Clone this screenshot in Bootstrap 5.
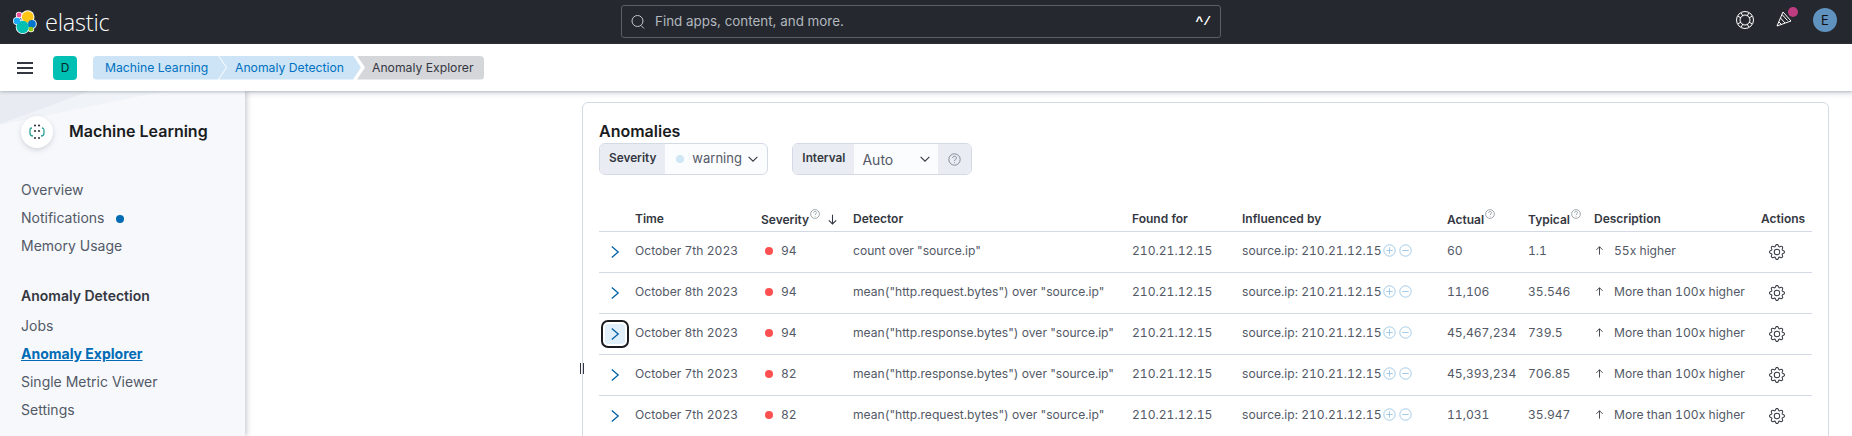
<!DOCTYPE html>
<html lang="en">
<head>
<meta charset="utf-8">
<title>Anomaly Explorer</title>
<link href="https://cdn.jsdelivr.net/npm/bootstrap@5.3.0/dist/css/bootstrap.min.css" rel="stylesheet">
<style>
html,body{height:436px;overflow:hidden;margin:0}
body{font-family:Inter,"Liberation Sans",sans-serif;color:#343741;background:#fff;font-size:14px}
.topbar{height:44px;background:#25282f;padding:0 15px 0 13px}
.brand-word{font-family:"Open Sans",sans-serif;font-weight:300;font-size:23.5px;line-height:44px;color:#fff;margin-left:8px;letter-spacing:-.2px}
.search-box{position:relative;width:600px;height:33px;margin-top:-1px;border:1px solid #5a5e65;border-radius:3px;color:#b3b8bf;padding:0 9px 0 8px}
.search-text{margin-left:9px;font-size:13.4px;flex-grow:1}
.shortcut{color:#fff;font-weight:700;font-size:13px;font-family:"Liberation Mono",monospace}
.top-slot{position:absolute;top:0}
.top-right{position:relative;width:110px;height:44px}
.ring-ic{left:6px;top:10px}
.party-ic{left:46px;top:9px}
.party-dot{position:absolute;left:59px;top:7px;width:10px;height:10px;border-radius:50%;background:#bd3d80}
.user-ava{position:absolute;left:84px;top:8px;width:24px;height:24px;border-radius:50%;background:#6092c0;color:#111;font-size:13px;text-align:center;line-height:24px}
.subbar{height:47px;background:#fff;padding-left:17px;box-shadow:0 1px 3px rgba(105,112,125,.45);position:relative;z-index:3}
.burger{width:16px;height:12px;border-top:2px solid #343741;border-bottom:2px solid #343741;position:relative;margin-right:20px}
.burger::after{content:"";position:absolute;left:0;right:0;top:3px;height:2px;background:#343741}
.space-tile{width:24px;height:24px;border-radius:4px;background:#00bfb3;color:#06282a;font-size:12px;text-align:center;line-height:24px;margin-right:16px}
.crumb{height:24px;line-height:24px;font-size:12.2px;white-space:nowrap}
.crumb-a{width:133px;padding-left:12px;background:#cce4f5;color:#0071c2;border-radius:4px 0 0 4px;clip-path:polygon(0 0,calc(100% - 8px) 0,100% 50%,calc(100% - 8px) 100%,0 100%)}
.crumb-b{width:142px;margin-left:-7px;padding-left:16px;background:#cce4f5;color:#0071c2;clip-path:polygon(0 0,calc(100% - 8px) 0,100% 50%,calc(100% - 8px) 100%,0 100%,8px 50%)}
.crumb-c{width:127px;margin-left:-4px;padding-left:15px;background:#d4d6da;color:#343741;border-radius:0 4px 4px 0;clip-path:polygon(0 0,100% 0,100% 100%,0 100%,8px 50%)}
.page-body{height:345px;position:relative}
.side{position:relative;width:245px;flex:none;height:345px;background:#f6f8fc;box-shadow:2px 0 5px rgba(105,112,125,.35);padding:25px 21px 0;overflow:hidden;z-index:2}
.side::before{content:"";position:absolute;left:0;top:0;width:165px;height:34px;background:#f0f3f8;clip-path:polygon(0 0,100% 0,0 100%)}
.side::after{content:"";position:absolute;left:0;top:0;width:90px;height:33px;background:#e8ebf1;clip-path:polygon(0 0,100% 0,0 100%)}
.side>*{position:relative;z-index:1}
.ml-disc{width:32px;height:32px;border-radius:50%;background:#fff;box-shadow:0 2px 5px rgba(105,112,125,.25);margin-right:16px}
.side-title{font-size:16px;font-weight:600;color:#1a1c21;padding-bottom:3px}
.side-nav{margin-top:28px}
.side-nav .nav-link{padding:0;height:28px;line-height:28px;color:#535966;font-size:14px}
.side-nav .side-head{margin-top:22px;margin-bottom:2px;font-weight:600;color:#343741;line-height:28px;height:28px}
.side-nav .nav-link.current{color:#006bb4;font-weight:700;text-decoration:underline}
.note-dot{display:inline-block;width:8px;height:8px;border-radius:50%;background:#006bb4;margin-left:11px}
.main-area{flex-grow:1;padding:11px 24px 0 337px;position:relative;background:linear-gradient(#eceef2,#fff 8px)}
.panel-box{height:400px;border:1px solid #d3dae6;border-radius:6px;padding:0 16px;background:#fff}
.panel-title{font-size:16px;font-weight:600;color:#1a1c21;margin:0;line-height:20px;padding-top:18px}
.ctrl-row{margin-top:2px;gap:24px;height:32px}
.ctrl-group{height:32px;border:1px solid #d3dae6;border-radius:6px;overflow:hidden;background:#fbfcfd;width:auto;flex-wrap:nowrap}
.ctrl-label{background:#e9edf3;border:0;border-radius:0;padding:0 9px;font-size:11.8px;font-weight:600;color:#343741;height:30px}
.ctrl-select{height:30px;color:#535966;font-size:13px;padding:0 7px 0 9px}
.sev-select{width:103px;padding-left:12px}
.int-select{width:86px;font-size:14px}
.warn-dot{width:8px;height:8px;border-radius:50%;background:#cfe6f5;margin-right:8px;flex:none}
.caret-ic{margin-left:auto}
.help-tile{width:33px;height:30px;background:#e9edf3}
.anom-table{table-layout:fixed;width:1213px;margin:31px 0 0;border-collapse:collapse;--bs-table-bg:transparent;--bs-table-color:#535966;font-variant-numeric:tabular-nums}
.anom-table th,.anom-table td{border-bottom:1px solid #d3dae6;padding:0 4px;vertical-align:middle;white-space:nowrap;overflow:visible;box-shadow:none}
.anom-table th{height:25px;font-size:12px;font-weight:600;color:#343741;padding-top:1px}
.anom-table td{height:41px;font-size:12.1px;color:#535966}
.sev-cell{padding-left:8px!important}
.sev-dot{display:inline-block;width:8px;height:8px;border-radius:50%;background:#fe5050;margin-right:8px}
.exp-btn{width:20px;height:20px;padding:0;border:0;background:transparent;margin-left:2px;border-radius:2px;display:block;position:relative}
.exp-btn.active-focus{background:#e1effa;outline:2px solid #1a1c21;outline-offset:2px;border-radius:3px}
.sup-ic{vertical-align:5px;margin-left:1px}
.sort-ic{margin-left:6px;vertical-align:-2px}
.act-icons{vertical-align:-2px;margin-left:1px}
.act-icons+.act-icons{margin-left:0}
.up-ic{margin-right:9px;vertical-align:-1px}
.gear-ic{display:block;margin-left:8px}
.grip{position:absolute;left:580px;top:272px;width:4px;height:11px;border-left:1px solid #343741;border-right:1px solid #343741;z-index:4}
</style>
</head>
<body>
<svg width="0" height="0" class="position-absolute">
  <symbol id="s-chev" viewBox="0 0 16 16"><path d="M4.800 2.500 11.200 8l-6.400 5.500" fill="none" stroke="#0061a6" stroke-width="1.300"/></symbol>
  <symbol id="s-q" viewBox="0 0 16 16"><circle cx="8" cy="8" r="7" fill="none" stroke="currentColor"/><path d="M5.800 6.200c0-3 4.600-3 4.600-.2 0 1.800-2.300 1.800-2.300 3.800M8.100 11.300v1" fill="none" stroke="currentColor"/></symbol>
  <symbol id="s-plus" viewBox="0 0 16 16"><circle cx="8" cy="8" r="7" fill="none" stroke="#8fbfe3"/><path d="M8 4v8M4 8h8" stroke="#8fbfe3"/></symbol>
  <symbol id="s-minus" viewBox="0 0 16 16"><circle cx="8" cy="8" r="7" fill="none" stroke="#8fbfe3"/><path d="M4 8h8" stroke="#8fbfe3"/></symbol>
  <symbol id="s-up" viewBox="0 0 16 16"><path d="M8 14V2.500M3.500 7 8 2.500 12.500 7" fill="none" stroke="#343741" stroke-width="1.300"/></symbol>
  <symbol id="s-down" viewBox="0 0 16 16"><path d="M8 2v11.500M3.500 9 8 13.500 12.500 9" fill="none" stroke="#343741" stroke-width="1.300"/></symbol>
  <symbol id="s-caret" viewBox="0 0 16 16"><path d="M3 5.500 8 10.500l5-5" fill="none" stroke="#343741" stroke-width="1.200"/></symbol>
  <symbol id="s-gear" viewBox="0 0 16 16"><path fill="#343741" d="M8 4.754a3.246 3.246 0 1 0 0 6.492 3.246 3.246 0 0 0 0-6.492zM5.754 8a2.246 2.246 0 1 1 4.492 0 2.246 2.246 0 0 1-4.492 0z"/><path fill="#343741" d="M9.796 1.343c-.527-1.790-3.065-1.790-3.592 0l-.094.319a.873.873 0 0 1-1.255.52l-.292-.16c-1.640-.892-3.433.902-2.540 2.541l.159.292a.873.873 0 0 1-.52 1.255l-.319.094c-1.790.527-1.790 3.065 0 3.592l.319.094a.873.873 0 0 1 .52 1.255l-.16.292c-.892 1.640.901 3.434 2.541 2.540l.292-.159a.873.873 0 0 1 1.255.52l.094.319c.527 1.790 3.065 1.790 3.592 0l.094-.319a.873.873 0 0 1 1.255-.52l.292.16c1.640.893 3.434-.902 2.540-2.541l-.159-.292a.873.873 0 0 1 .52-1.255l.319-.094c1.790-.527 1.790-3.065 0-3.592l-.319-.094a.873.873 0 0 1-.52-1.255l.16-.292c.893-1.640-.902-3.433-2.541-2.540l-.292.159a.873.873 0 0 1-1.255-.52l-.094-.319zm-2.633.283c.246-.835 1.428-.835 1.674 0l.094.319a1.873 1.873 0 0 0 2.693 1.115l.291-.16c.764-.415 1.600.42 1.184 1.185l-.159.292a1.873 1.873 0 0 0 1.116 2.692l.318.094c.835.246.835 1.428 0 1.674l-.319.094a1.873 1.873 0 0 0-1.115 2.693l.16.291c.415.764-.42 1.600-1.185 1.184l-.291-.159a1.873 1.873 0 0 0-2.693 1.116l-.094.318c-.246.835-1.428.835-1.674 0l-.094-.319a1.873 1.873 0 0 0-2.692-1.115l-.292.16c-.764.415-1.600-.42-1.184-1.185l.159-.291A1.873 1.873 0 0 0 1.945 8.930l-.319-.094c-.835-.246-.835-1.428 0-1.674l.319-.094A1.873 1.873 0 0 0 3.060 4.377l-.16-.292c-.415-.764.42-1.600 1.185-1.184l.292.159a1.873 1.873 0 0 0 2.692-1.115l.094-.319z"/></symbol>
</svg>

<header class="topbar d-flex align-items-center justify-content-between">
  <div class="d-flex align-items-center" style="width:608px">
    <svg width="24" height="24" viewBox="0 0 24 24">
      <circle cx="14.700" cy="7" r="6.800" fill="#fff"/><circle cx="9.700" cy="17" r="7" fill="#fff"/><circle cx="6" cy="5" r="3.200" fill="#fff"/><circle cx="4" cy="11" r="4" fill="#fff"/><circle cx="19" cy="14" r="4.800" fill="#fff"/><circle cx="18" cy="19" r="3.200" fill="#fff"/>
      <circle cx="14.700" cy="7" r="5.800" fill="#fec514"/><circle cx="9.700" cy="17" r="6.200" fill="#00bfb3"/><circle cx="6" cy="5" r="2.400" fill="#f04e98"/><circle cx="4" cy="11" r="3.300" fill="#1ba9f5"/><circle cx="19" cy="14" r="3.900" fill="#0077cc"/><circle cx="18" cy="19.200" r="2.400" fill="#93c90e"/>
    </svg>
    <span class="brand-word">elastic</span>
  </div>
  <div class="search-box d-flex align-items-center">
    <svg width="16" height="16" viewBox="0 0 16 16"><circle cx="7.500" cy="7" r="5.500" fill="none" stroke="#c6cad0"/><path d="m11 11.500 3 3" stroke="#c6cad0"/></svg>
    <span class="search-text">Find apps, content, and more.</span>
    <span class="shortcut">^/</span>
  </div>
  <div class="top-right flex-none ms-auto" style="margin-right:-2px">
    <svg class="top-slot ring-ic" width="20" height="20" viewBox="0 0 20 20" fill="none" stroke="#fff"><circle cx="10" cy="10" r="8.500"/><circle cx="10" cy="10" r="5"/><path d="M2.800 6.200l3.400 1.700M6.200 2.800l1.700 3.400M17.200 6.200l-3.400 1.700M13.800 2.800l-1.700 3.400M2.800 13.800l3.400-1.700M6.200 17.200l1.700-3.400M17.200 13.800l-3.400-1.700M13.800 17.200l-1.700-3.400"/></svg>
    <svg class="top-slot party-ic" width="20" height="20" viewBox="0 0 20 20" fill="none" stroke="#fff"><path d="M8 3 2 17l14-5z"/><path d="M5.500 9 10 14M4 13l2.500 2.500M7 5.500l5.500 6"/></svg>
    <span class="party-dot"></span>
    <span class="user-ava">E</span>
  </div>
</header>

<div class="subbar d-flex align-items-center">
  <span class="burger"></span>
  <span class="space-tile">D</span>
  <nav class="d-flex" aria-label="breadcrumb">
    <span class="crumb crumb-a">Machine Learning</span>
    <span class="crumb crumb-b">Anomaly Detection</span>
    <span class="crumb crumb-c">Anomaly Explorer</span>
  </nav>
</div>

<div class="page-body d-flex">
  <aside class="side">
    <div class="d-flex align-items-center">
      <span class="ml-disc d-flex align-items-center justify-content-center">
        <svg width="18" height="18" viewBox="0 0 18 18"><g fill="#343741"><circle cx="7" cy="2.500" r="1.100"/><circle cx="11" cy="2.500" r="1.100"/><circle cx="7" cy="8" r="1.100"/><circle cx="11" cy="8" r="1.100"/><circle cx="7" cy="15" r="1.100"/><circle cx="11" cy="15" r="1.100"/></g><path d="M4 5C2 5 2 6 2 8v2c0 2 1 3 3 3M14 5c2 0 2 1 2 3v2c0 2-1 3-3 3" fill="none" stroke="#2aa198" stroke-width="1.300"/></svg>
      </span>
      <span class="side-title">Machine Learning</span>
    </div>
    <nav class="nav flex-column side-nav">
      <a class="nav-link" href="#">Overview</a>
      <a class="nav-link" href="#">Notifications<span class="note-dot"></span></a>
      <a class="nav-link" href="#">Memory Usage</a>
      <div class="side-head">Anomaly Detection</div>
      <a class="nav-link" href="#">Jobs</a>
      <a class="nav-link current" href="#">Anomaly Explorer</a>
      <a class="nav-link" href="#">Single Metric Viewer</a>
      <a class="nav-link" href="#">Settings</a>
    </nav>
  </aside>
  <span class="grip"></span>
  <main class="main-area">
    <section class="panel-box">
      <h2 class="panel-title">Anomalies</h2>
      <div class="d-flex ctrl-row">
        <div class="input-group ctrl-group">
          <span class="input-group-text ctrl-label">Severity</span>
          <span class="ctrl-select sev-select d-flex align-items-center"><span class="warn-dot"></span>warning<svg class="caret-ic" width="14" height="14"><use href="#s-caret"/></svg></span>
        </div>
        <div class="input-group ctrl-group">
          <span class="input-group-text ctrl-label">Interval</span>
          <span class="ctrl-select int-select d-flex align-items-center">Auto<svg class="caret-ic" width="14" height="14"><use href="#s-caret"/></svg></span>
          <span class="help-tile d-flex align-items-center justify-content-center text-secondary"><svg width="13" height="13"><use href="#s-q"/></svg></span>
        </div>
      </div>
      <table class="table anom-table">
        <colgroup><col style="width:32px"><col style="width:126px"><col style="width:92px"><col style="width:279px"><col style="width:110px"><col style="width:205px"><col style="width:81px"><col style="width:66px"><col style="width:167px"><col style="width:55px"></colgroup>
        <thead><tr><th></th><th>Time</th><th>Severity<svg class="sup-ic text-secondary" width="10" height="10"><use href="#s-q"/></svg><svg class="sort-ic" width="13" height="13"><use href="#s-down"/></svg></th><th>Detector</th><th>Found for</th><th>Influenced by</th><th>Actual<svg class="sup-ic text-secondary" width="10" height="10"><use href="#s-q"/></svg></th><th>Typical<svg class="sup-ic text-secondary" width="10" height="10"><use href="#s-q"/></svg></th><th>Description</th><th>Actions</th></tr></thead>
        <tbody>
          <tr><td><button class="exp-btn" aria-label="Expand"><svg width="16" height="16" class="d-block mx-auto"><use href="#s-chev"/></svg></button></td><td>October 7th 2023</td><td class="sev-cell"><span class="sev-dot"></span>94</td><td>count over "source.ip"</td><td>210.21.12.15</td><td>source.ip: 210.21.12.15<svg class="act-icons" width="13" height="13"><use href="#s-plus"/></svg> <svg class="act-icons" width="13" height="13"><use href="#s-minus"/></svg></td><td>60</td><td>1.1</td><td><svg class="up-ic" width="11" height="11"><use href="#s-up"/></svg>55x higher</td><td><svg class="gear-ic" width="16" height="16"><use href="#s-gear"/></svg></td></tr>
          <tr><td><button class="exp-btn" aria-label="Expand"><svg width="16" height="16" class="d-block mx-auto"><use href="#s-chev"/></svg></button></td><td>October 8th 2023</td><td class="sev-cell"><span class="sev-dot"></span>94</td><td>mean("http.request.bytes") over "source.ip"</td><td>210.21.12.15</td><td>source.ip: 210.21.12.15<svg class="act-icons" width="13" height="13"><use href="#s-plus"/></svg> <svg class="act-icons" width="13" height="13"><use href="#s-minus"/></svg></td><td>11,106</td><td>35.546</td><td><svg class="up-ic" width="11" height="11"><use href="#s-up"/></svg>More than 100x higher</td><td><svg class="gear-ic" width="16" height="16"><use href="#s-gear"/></svg></td></tr>
          <tr><td><button class="exp-btn active-focus" aria-label="Expand"><svg width="16" height="16" class="d-block mx-auto"><use href="#s-chev"/></svg></button></td><td>October 8th 2023</td><td class="sev-cell"><span class="sev-dot"></span>94</td><td>mean("http.response.bytes") over "source.ip"</td><td>210.21.12.15</td><td>source.ip: 210.21.12.15<svg class="act-icons" width="13" height="13"><use href="#s-plus"/></svg> <svg class="act-icons" width="13" height="13"><use href="#s-minus"/></svg></td><td>45,467,234</td><td>739.5</td><td><svg class="up-ic" width="11" height="11"><use href="#s-up"/></svg>More than 100x higher</td><td><svg class="gear-ic" width="16" height="16"><use href="#s-gear"/></svg></td></tr>
          <tr><td><button class="exp-btn" aria-label="Expand"><svg width="16" height="16" class="d-block mx-auto"><use href="#s-chev"/></svg></button></td><td>October 7th 2023</td><td class="sev-cell"><span class="sev-dot"></span>82</td><td>mean("http.response.bytes") over "source.ip"</td><td>210.21.12.15</td><td>source.ip: 210.21.12.15<svg class="act-icons" width="13" height="13"><use href="#s-plus"/></svg> <svg class="act-icons" width="13" height="13"><use href="#s-minus"/></svg></td><td>45,393,234</td><td>706.85</td><td><svg class="up-ic" width="11" height="11"><use href="#s-up"/></svg>More than 100x higher</td><td><svg class="gear-ic" width="16" height="16"><use href="#s-gear"/></svg></td></tr>
          <tr><td><button class="exp-btn" aria-label="Expand"><svg width="16" height="16" class="d-block mx-auto"><use href="#s-chev"/></svg></button></td><td>October 7th 2023</td><td class="sev-cell"><span class="sev-dot"></span>82</td><td>mean("http.request.bytes") over "source.ip"</td><td>210.21.12.15</td><td>source.ip: 210.21.12.15<svg class="act-icons" width="13" height="13"><use href="#s-plus"/></svg> <svg class="act-icons" width="13" height="13"><use href="#s-minus"/></svg></td><td>11,031</td><td>35.947</td><td><svg class="up-ic" width="11" height="11"><use href="#s-up"/></svg>More than 100x higher</td><td><svg class="gear-ic" width="16" height="16"><use href="#s-gear"/></svg></td></tr>
        </tbody>
      </table>
    </section>
  </main>
</div>
<script src="https://cdn.jsdelivr.net/npm/bootstrap@5.3.0/dist/js/bootstrap.bundle.min.js"></script>
</body>
</html>
